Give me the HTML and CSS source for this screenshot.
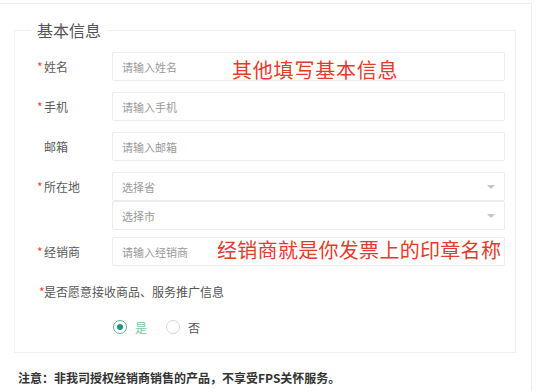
FILE: index.html
```html
<!DOCTYPE html>
<html lang="zh-CN">
<head>
    <meta charset="UTF-8">
    <meta name="viewport" content="width=device-width, initial-scale=1.0">
    <title>基本信息</title>
    <link rel="stylesheet" href="styles.css">
</head>
<body>
    <div class="page">
        <fieldset class="info">
            <legend>基本信息</legend>

            <div class="row">
                <label class="label"><span class="req">*</span>姓名</label>
                <input class="field" type="text" placeholder="请输入姓名">
                <span class="note note-name">其他填写基本信息</span>
            </div>

            <div class="row">
                <label class="label"><span class="req">*</span>手机</label>
                <input class="field" type="text" placeholder="请输入手机">
            </div>

            <div class="row">
                <label class="label"><span class="req"></span>邮箱</label>
                <input class="field" type="text" placeholder="请输入邮箱">
            </div>

            <div class="row row-area">
                <label class="label"><span class="req">*</span>所在地</label>
                <div class="stack">
                    <div class="field select">选择省<span class="caret"></span></div>
                    <div class="field select">选择市<span class="caret"></span></div>
                </div>
            </div>

            <div class="row">
                <label class="label"><span class="req">*</span>经销商</label>
                <input class="field" type="text" placeholder="请输入经销商">
                <span class="note note-dealer">经销商就是你发票上的印章名称</span>
            </div>

            <div class="consent"><span class="req">*</span>是否愿意接收商品、服务推广信息</div>

            <div class="radios">
                <span class="option">
                    <span class="circle checked"></span>
                    <span class="option-text active">是</span>
                </span>
                <span class="option">
                    <span class="circle"></span>
                    <span class="option-text">否</span>
                </span>
            </div>
        </fieldset>

        <p class="notice">注意：非我司授权经销商销售的产品，不享受FPS关怀服务。</p>
    </div>
</body>
</html>
```

FILE: styles.css
```css
/* Global Styles */
body {
    font-family: "Noto Sans CJK SC", "Noto Sans", sans-serif;
    background-color: #fff;
    margin: 0;
    padding: 0;
}

.page {
    width: 532px;
    height: 388px;
    margin-top: 3px;
    border-top: 1px solid #f0f0f0;
    border-right: 1px solid #ececec;
    box-sizing: border-box;
}

.info {
    width: 502px;
    margin: 16px 0 0 14px;
    padding: 12px 0 15px 0;
    border: 1px solid #f1f1f1;
    box-sizing: border-box;
}

.info legend {
    margin-left: 16px;
    padding: 0 6px;
    font-size: 16px;
    line-height: 20px;
    color: #555;
}

.row {
    position: relative;
    display: flex;
    align-items: center;
    padding-left: 22px;
    margin-bottom: 11px;
}

.row-area {
    align-items: flex-start;
    margin-bottom: 7px;
}

.row-area .label {
    height: 29px;
}

.label {
    display: flex;
    align-items: center;
    width: 75px;
    font-size: 12px;
    color: #5a5a5a;
}

.req {
    display: inline-block;
    width: 7px;
    color: #e8473c;
}

.field {
    width: 393px;
    height: 29px;
    padding: 0 9px;
    border: 1px solid #ececec;
    border-radius: 2px;
    box-sizing: border-box;
    font-family: inherit;
    font-size: 11px;
    color: #333;
    background-color: #fff;
    outline: none;
}

.field::placeholder {
    color: #999;
}

.stack {
    display: flex;
    flex-direction: column;
}

.select {
    position: relative;
    display: flex;
    align-items: center;
    color: #999;
}

.caret {
    position: absolute;
    right: 9px;
    top: 12px;
    width: 0;
    height: 0;
    border-left: 4px solid transparent;
    border-right: 4px solid transparent;
    border-top: 4px solid #c4c4c4;
}

.note {
    position: absolute;
    font-size: 20px;
    line-height: 24px;
    color: #e23b2e;
    white-space: nowrap;
}

.note-name {
    left: 217px;
    top: 6px;
    letter-spacing: 0.8px;
}

.note-dealer {
    left: 202px;
    top: 1px;
    letter-spacing: 0.3px;
}

.consent {
    margin-top: 17px;
    padding-left: 24px;
    font-size: 12px;
    line-height: 18px;
    color: #555;
}

.consent .req {
    width: 5px;
}

.radios {
    display: flex;
    align-items: center;
    height: 20px;
    margin-top: 16px;
    padding-left: 98px;
}

.option {
    display: flex;
    align-items: center;
    margin-right: 19px;
}

.circle {
    position: relative;
    width: 14px;
    height: 14px;
    border: 1px solid #d6d6d6;
    border-radius: 50%;
    box-sizing: border-box;
}

.circle.checked {
    border-color: #5fb3a0;
}

.circle.checked::after {
    content: "";
    position: absolute;
    left: 3px;
    top: 3px;
    width: 6px;
    height: 6px;
    border-radius: 50%;
    background-color: #1f957c;
}

.option-text {
    margin-left: 8px;
    font-size: 12px;
    color: #555;
}

.option-text.active {
    color: #7cc7a3;
}

.notice {
    margin: 16px 0 0 18px;
    font-size: 12px;
    line-height: 18px;
    font-weight: bold;
    color: #333;
}
```
